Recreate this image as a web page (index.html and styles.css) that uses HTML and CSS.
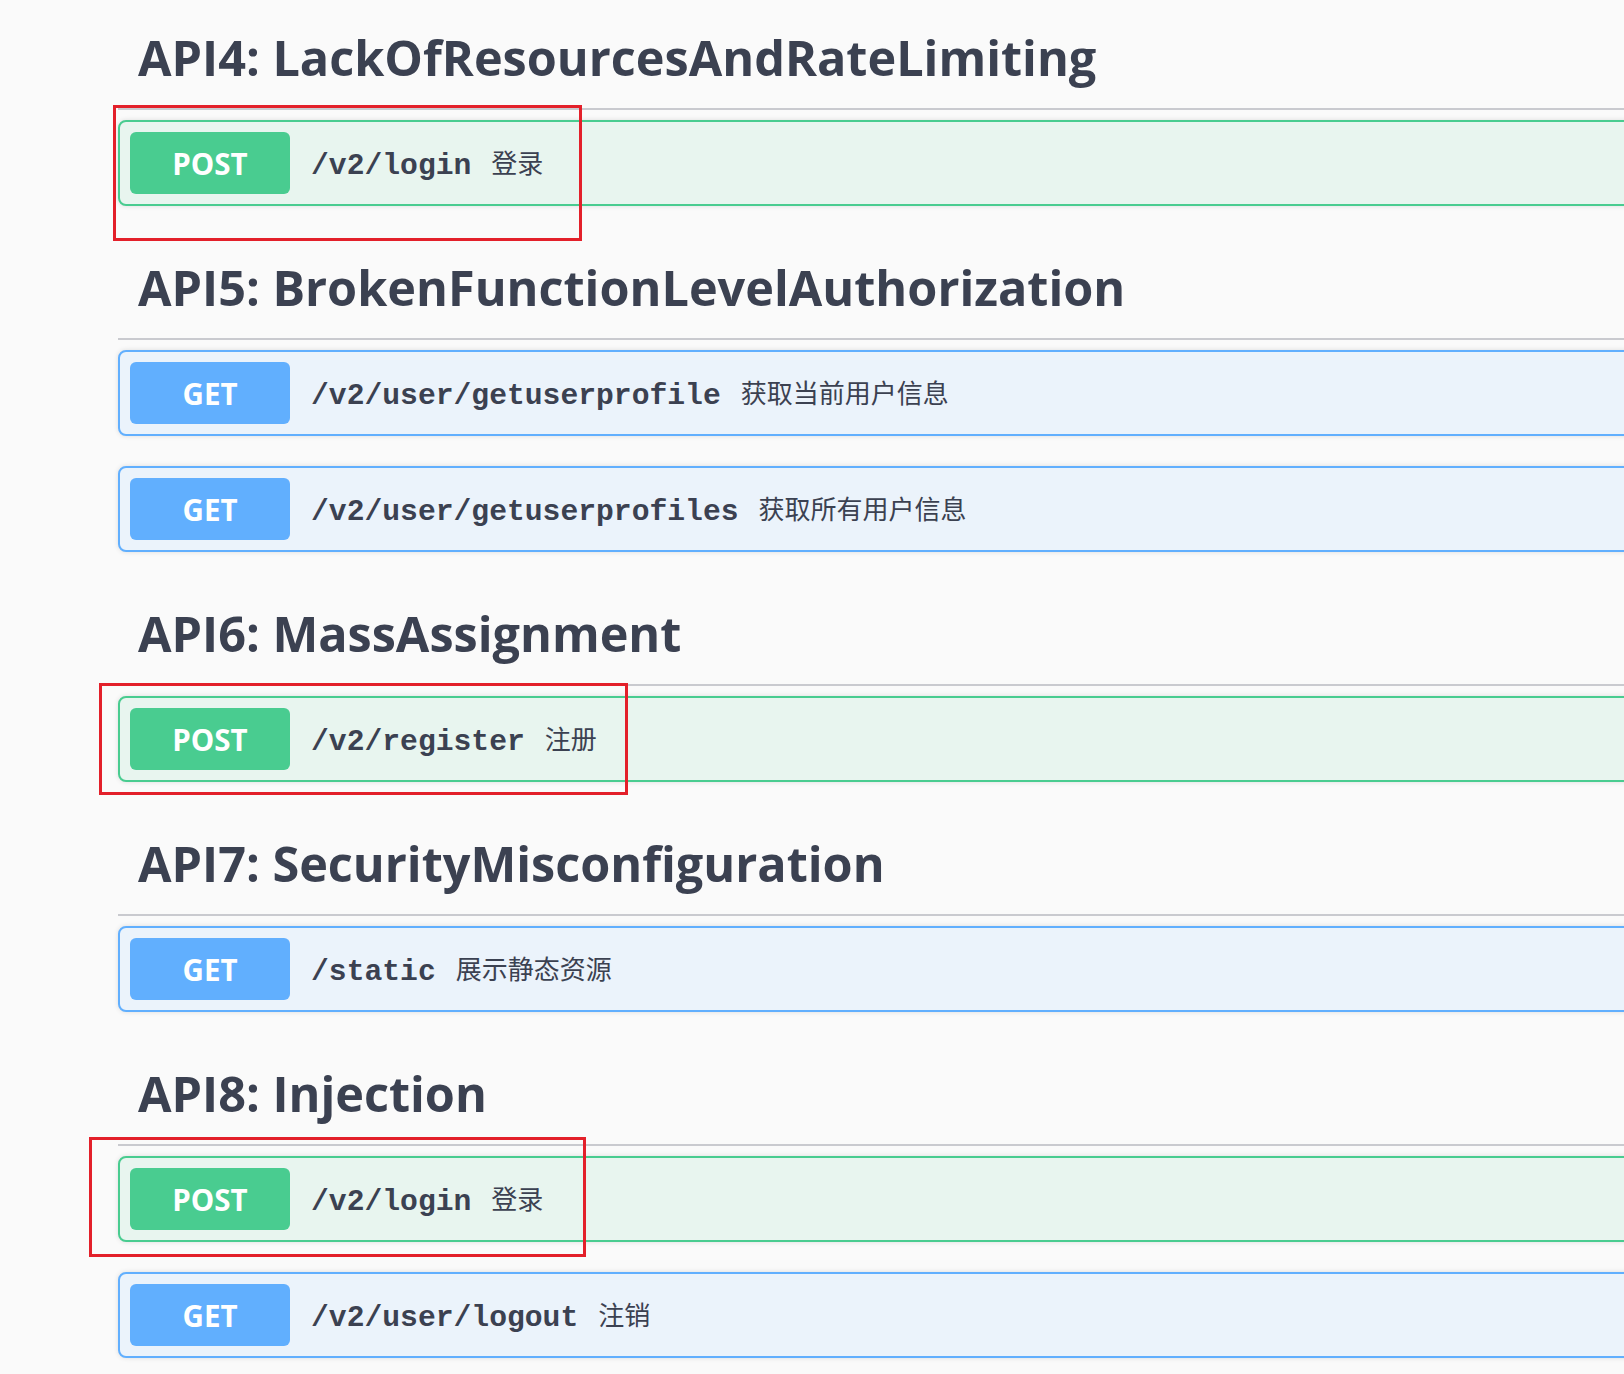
FILE: index.html
```html
<!DOCTYPE html>
<html lang="zh">
<head>
<meta charset="utf-8">
<title>Swagger tags</title>
<link rel="stylesheet" href="styles.css">
</head>
<body>
<div class="page">
  <section class="tag-section">
    <h3 class="tag">API4: LackOfResourcesAndRateLimiting</h3>
    <div class="ops">
      <div class="op op-post"><span class="method">POST</span><span class="path">/v2/login</span><span class="summary">登录</span></div>
    </div>
  </section>
  <section class="tag-section">
    <h3 class="tag">API5: BrokenFunctionLevelAuthorization</h3>
    <div class="ops">
      <div class="op op-get"><span class="method">GET</span><span class="path">/v2/user/getuserprofile</span><span class="summary">获取当前用户信息</span></div>
      <div class="op op-get"><span class="method">GET</span><span class="path">/v2/user/getuserprofiles</span><span class="summary">获取所有用户信息</span></div>
    </div>
  </section>
  <section class="tag-section">
    <h3 class="tag">API6: MassAssignment</h3>
    <div class="ops">
      <div class="op op-post"><span class="method">POST</span><span class="path">/v2/register</span><span class="summary">注册</span></div>
    </div>
  </section>
  <section class="tag-section">
    <h3 class="tag">API7: SecurityMisconfiguration</h3>
    <div class="ops">
      <div class="op op-get"><span class="method">GET</span><span class="path">/static</span><span class="summary">展示静态资源</span></div>
    </div>
  </section>
  <section class="tag-section">
    <h3 class="tag">API8: Injection</h3>
    <div class="ops">
      <div class="op op-post"><span class="method">POST</span><span class="path">/v2/login</span><span class="summary">登录</span></div>
      <div class="op op-get"><span class="method">GET</span><span class="path">/v2/user/logout</span><span class="summary">注销</span></div>
    </div>
  </section>
</div>
<div class="mark mark-1"></div>
<div class="mark mark-2"></div>
<div class="mark mark-3"></div>
</body>
</html>
```
FILE: styles.css
```css
html, body {
  margin: 0;
  padding: 0;
}
body {
  background: #fafafa;
  overflow: hidden;
  width: 1624px;
  height: 1374px;
  position: relative;
  color: #3b4151;
}
.page {
  padding: 6px 0 0 118px;
  margin-right: -60px;
  display: flex;
  flex-direction: column;
}
.tag-section {
  display: flex;
  flex-direction: column;
}
.tag {
  margin: 0;
  height: 102px;
  line-height: 102px;
  padding: 0 0 0 20px;
  border-bottom: 2px solid #c9cacf;
  font-family: "Open Sans", "Noto Sans", sans-serif;
  font-weight: 700;
  font-size: 48.6px;
  color: #3b4151;
  white-space: nowrap;
}
.ops {
  display: flex;
  flex-direction: column;
  margin-top: 10px;
}
.op {
  display: flex;
  align-items: center;
  box-sizing: border-box;
  height: 86px;
  padding: 0 10px;
  margin-bottom: 30px;
  border: 2px solid;
  border-radius: 8px;
  box-shadow: 0 0 5px rgba(0, 0, 0, 0.12);
}
.op-post {
  border-color: #49cc90;
  background: #e8f5ef;
}
.op-get {
  border-color: #61affe;
  background: #ebf3fb;
}
.method {
  flex: none;
  width: 160px;
  height: 62px;
  border-radius: 6px;
  display: flex;
  align-items: center;
  justify-content: center;
  font-family: "Open Sans", "Noto Sans", sans-serif;
  font-weight: 700;
  font-size: 29.5px;
  color: #fff;
}
.op-post .method { background: #49cc90; }
.op-get .method { background: #61affe; }
.path {
  padding: 5px 0 0 21px;
  font-family: "Liberation Mono", "DejaVu Sans Mono", monospace;
  font-weight: 700;
  font-size: 29.7px;
  color: #3b4151;
  white-space: nowrap;
}
.summary {
  padding: 0 0 4px 20px;
  font-family: "Noto Sans CJK SC", "Noto Sans", sans-serif;
  font-size: 26px;
  color: #3b4151;
  white-space: nowrap;
}
.mark {
  position: absolute;
  border: 3px solid #e3202a;
  box-sizing: border-box;
}
.mark-1 { left: 113px; top: 105px; width: 469px; height: 136px; }
.mark-2 { left: 99px; top: 683px; width: 529px; height: 112px; }
.mark-3 { left: 89px; top: 1137px; width: 497px; height: 120px; }
```
